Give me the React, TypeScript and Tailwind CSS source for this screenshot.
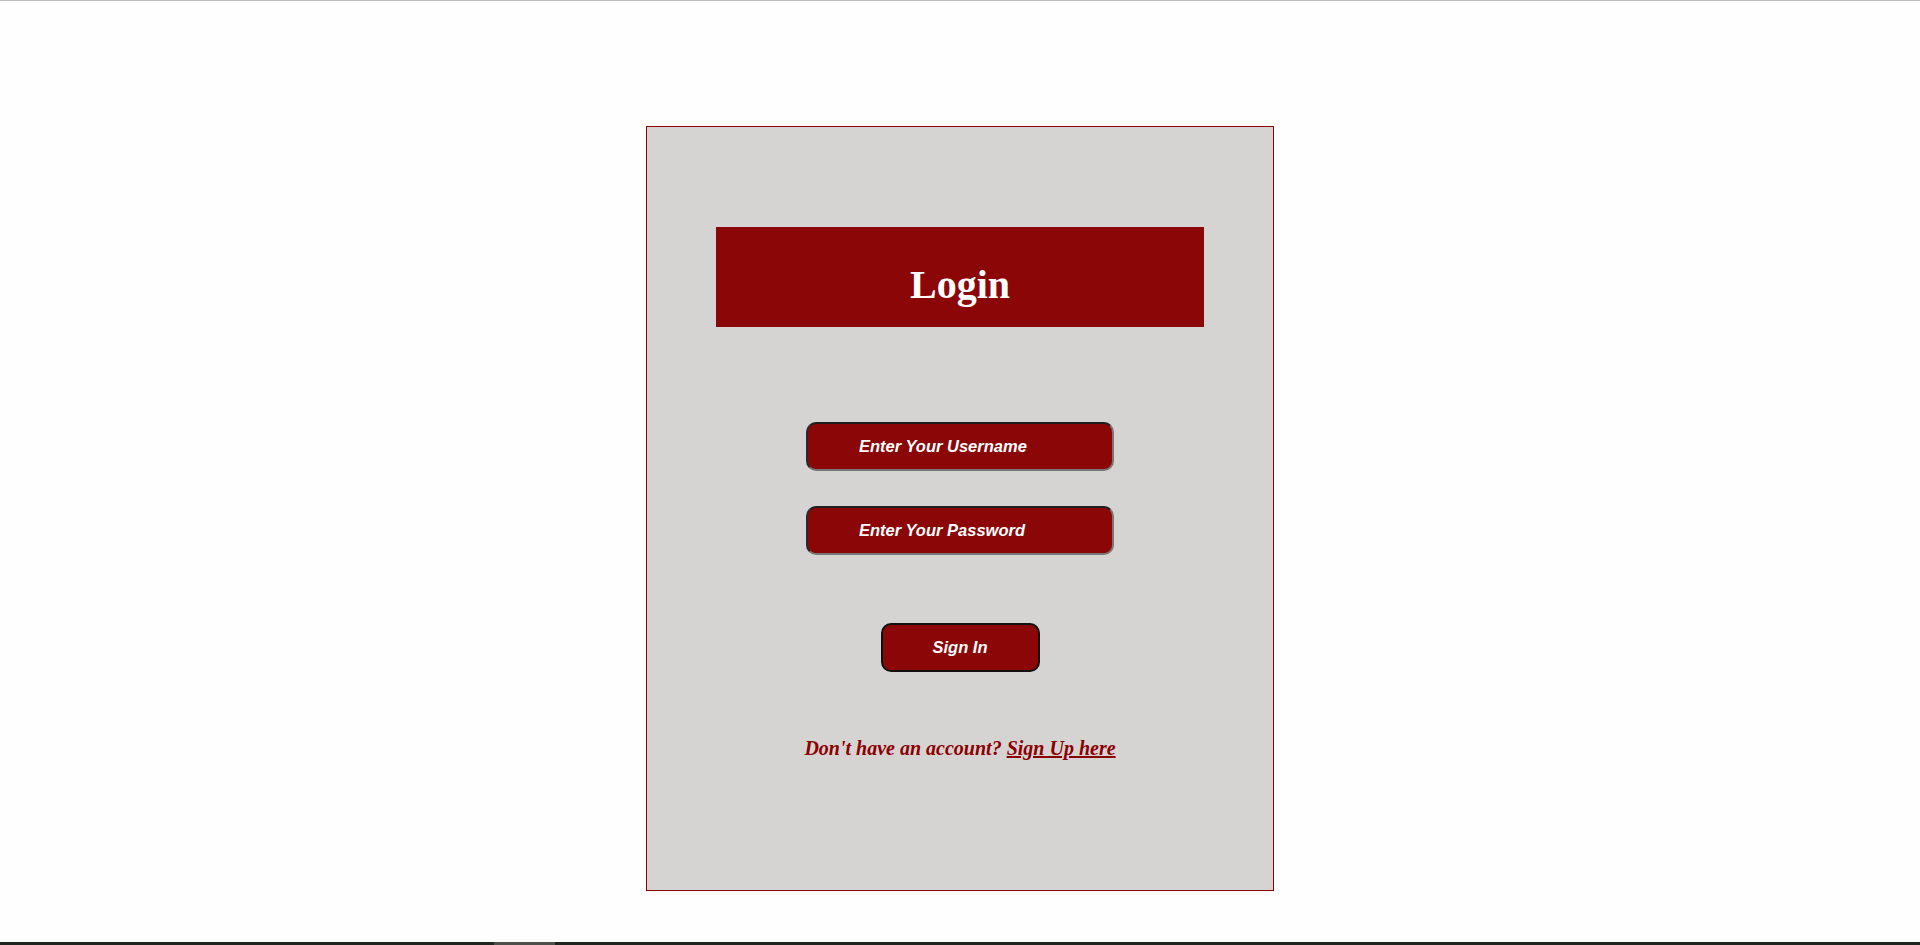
export default function App() {
  return (
    <div className="h-[945px] flex flex-col bg-[#fefefe] overflow-hidden">
      <div className="h-px bg-[#bdbdbd]" />
      <div className="flex-1 pt-[125px]">
        <div className="mx-auto w-[628px] h-[765px] border border-[#8b0000] bg-[#d6d4d3] flex flex-col items-center pt-[100px]">
          <div className="w-[488px] h-[100px] bg-[#8b0707] flex items-center justify-center pt-[15px]">
            <h1 className="text-[40px] font-bold text-white font-['Liberation_Serif',serif]">Login</h1>
          </div>

          <form className="flex flex-col items-center mt-[95px]" onSubmit={(e) => e.preventDefault()}>
            <input
              type="text"
              placeholder="Enter Your Username"
              className="w-[308px] h-[49px] rounded-[10px] bg-[#8b0707] border-2 border-t-[#1e1e1e] border-l-[#2a2a2a] border-b-[#777] border-r-[#777] pl-[51px] text-white placeholder:text-white text-[16.5px] font-bold italic font-['Liberation_Sans',sans-serif] outline-none"
            />
            <input
              type="password"
              placeholder="Enter Your Password"
              className="mt-[35px] w-[308px] h-[49px] rounded-[10px] bg-[#8b0707] border-2 border-t-[#1e1e1e] border-l-[#2a2a2a] border-b-[#777] border-r-[#777] pl-[51px] text-white placeholder:text-white text-[16.5px] font-bold italic font-['Liberation_Sans',sans-serif] outline-none"
            />
            <button
              type="submit"
              className="mt-[68px] w-[159px] h-[49px] rounded-[10px] bg-[#8b0707] border-2 border-[#111] text-white text-[16.5px] font-bold italic font-['Liberation_Sans',sans-serif]"
            >
              Sign In
            </button>
          </form>

          <p className="mt-[61px] text-[20px] font-bold italic text-[#8b0000] font-['Liberation_Serif',serif]">
            Don't have an account? <a href="#" className="underline">Sign Up here</a>
          </p>
        </div>
      </div>
      <div className="h-[3px] flex bg-[#222620]">
        <div className="w-[494px]" />
        <div className="w-[61px] bg-[#4f504c]" />
      </div>
    </div>
  );
}
